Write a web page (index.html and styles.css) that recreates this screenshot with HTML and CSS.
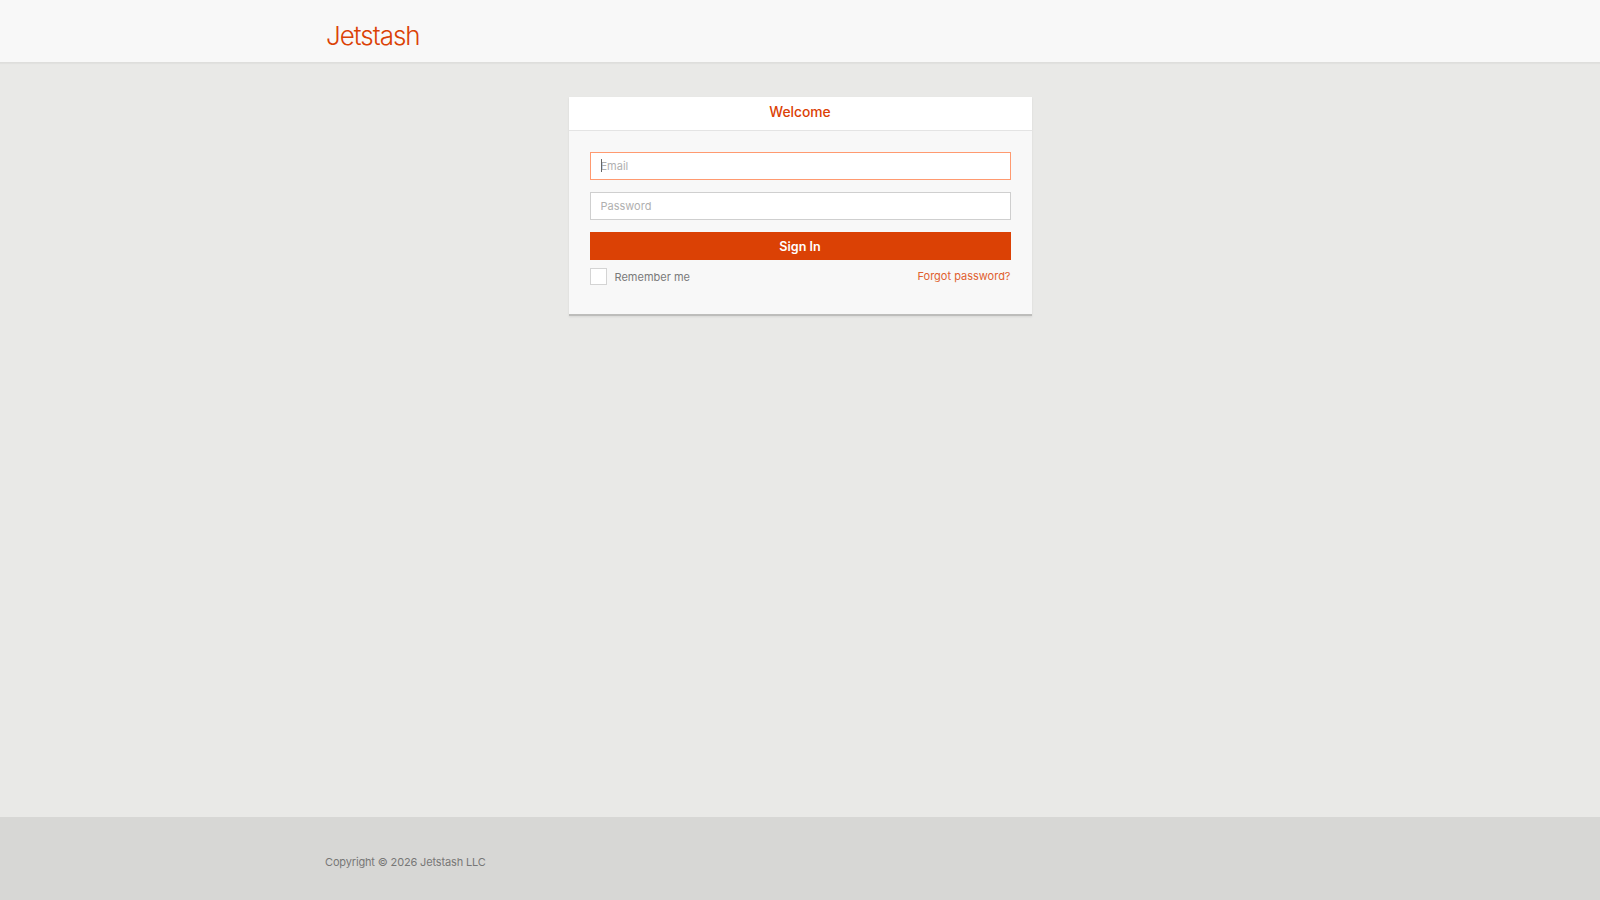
FILE: index.html
```html
<!doctype html>
<html lang="en">
	<head>
		<meta charset="UTF-8" />
		<meta name="viewport" content="width=device-width, initial-scale=1.0" />
		<title>Jetstash - Sign In</title>
		<link rel="stylesheet" href="styles.css">
	</head>

	<body>
		<header class="site-header">
			<div class="wrap">
				<a class="logo" href="#">Jetstash</a>
			</div>
		</header>

		<main class="site-main">
			<div class="login-card">
				<h1 class="login-title">Welcome</h1>
				<form class="login-form">
					<div class="field field-focus">
						<input class="text-input" type="text" placeholder="Email" />
						<span class="caret"></span>
					</div>
					<div class="field">
						<input class="text-input" type="password" placeholder="Password" />
					</div>
					<button class="submit-button" type="button">Sign In</button>
					<div class="form-meta">
						<label class="remember">
							<span class="checkbox"></span>
							Remember me
						</label>
						<a class="forgot" href="#">Forgot password?</a>
					</div>
				</form>
			</div>
		</main>

		<footer class="site-footer">
			<div class="wrap">Copyright © 2026 Jetstash LLC</div>
		</footer>
	</body>
</html>
```

FILE: styles.css
```css
* {
	box-sizing: border-box;
}

body {
	font-family: Inter, "Open Sans", sans-serif;
	margin: 0;
	min-height: 900px;
	display: flex;
	flex-direction: column;
	background: #e9e9e7;
	color: #6b6b6b;
}

.wrap {
	width: 950px;
	margin: 0 auto;
}

.site-header {
	height: 63px;
	background: #f8f8f8;
	border-bottom: 1px solid #dededc;
	box-shadow: 0 1px 1px rgba(0, 0, 0, 0.03);
}

.logo {
	display: block;
	padding-top: 15px;
	margin-left: 1px;
	font-size: 26px;
	line-height: 42px;
	font-weight: 300;
	letter-spacing: -1px;
	color: #db4105;
	text-decoration: none;
}

.site-main {
	flex: 1;
	padding-top: 34px;
}

.login-card {
	width: 463px;
	margin: 0 auto;
	background: #f8f8f8;
	border-bottom: 2px solid #bdbdbb;
	box-shadow: 0 1px 2px rgba(0, 0, 0, 0.08);
}

.login-title {
	margin: 0;
	height: 34px;
	background: #fff;
	border-bottom: 1px solid #e4e4e4;
	text-align: center;
	font-size: 13.8px;
	line-height: 30px;
	font-weight: 500;
	color: #db4105;
}

.login-form {
	padding: 21px 21px 29px;
}

.field {
	position: relative;
	margin-bottom: 12px;
}

.text-input {
	display: block;
	width: 100%;
	height: 28px;
	padding: 0 10px 1px;
	background: #fff;
	border: 1px solid #cfcfcf;
	border-radius: 0;
	outline: none;
	font-family: inherit;
	font-size: 11px;
}

.text-input::placeholder {
	color: #b0b0b0;
	opacity: 1;
}

.field-focus .text-input {
	border-color: #ff9a70;
}

.caret {
	position: absolute;
	left: 11px;
	top: 7px;
	width: 1px;
	height: 13px;
	background: #666;
}

.submit-button {
	display: block;
	width: 100%;
	height: 28px;
	padding: 0;
	background: #db4105;
	border: none;
	border-radius: 0;
	color: #fff;
	font-family: inherit;
	font-size: 12.6px;
	font-weight: 600;
}

.form-meta {
	display: flex;
	justify-content: space-between;
	align-items: flex-start;
	margin-top: 8px;
	font-size: 11px;
}

.remember {
	display: flex;
	align-items: center;
	gap: 8px;
	color: #7a7a7a;
}

.checkbox {
	width: 17px;
	height: 17px;
	background: #fff;
	border: 1px solid #d4d4d4;
}

.forgot {
	padding-top: 1px;
	color: #e0602f;
	text-decoration: none;
}

.site-footer {
	height: 83px;
	background: #d7d7d5;
	font-size: 11px;
	letter-spacing: -0.15px;
	line-height: 16px;
	padding-top: 37px;
	color: #777;
}
```
